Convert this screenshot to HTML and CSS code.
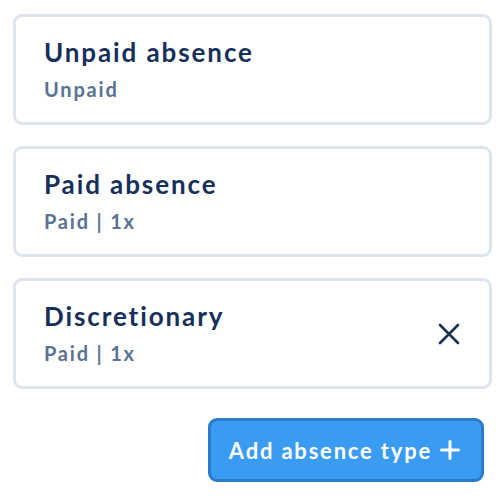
FILE: index.html
```html
<!DOCTYPE html>
<html lang="en">
<head>
<meta charset="utf-8">
<title>Absence types</title>
<link rel="stylesheet" href="styles.css">
</head>
<body>
<main class="list">
  <section class="card">
    <div class="card-text">
      <h2 class="card-title">Unpaid absence</h2>
      <p class="card-sub">Unpaid</p>
    </div>
  </section>
  <section class="card">
    <div class="card-text">
      <h2 class="card-title">Paid absence</h2>
      <p class="card-sub">Paid | 1x</p>
    </div>
  </section>
  <section class="card">
    <div class="card-text">
      <h2 class="card-title">Discretionary</h2>
      <p class="card-sub">Paid | 1x</p>
    </div>
    <button class="remove" type="button" aria-label="Remove">
      <svg width="22" height="22" viewBox="0 0 22 22" aria-hidden="true">
        <path d="M2 2 L20 20 M20 2 L2 20" stroke="#1b3152" stroke-width="2.6" stroke-linecap="round" fill="none"/>
      </svg>
    </button>
  </section>
  <div class="actions">
    <button class="add-btn" type="button">
      <span>Add absence type</span>
      <svg width="20" height="20" viewBox="0 0 20 20" aria-hidden="true">
        <path d="M10 1.5 V18.5 M1.5 10 H18.5" stroke="#ffffff" stroke-width="3" stroke-linecap="round" fill="none"/>
      </svg>
    </button>
  </div>
</main>
</body>
</html>
```
FILE: styles.css
```css
* { box-sizing: border-box; }
html, body { margin: 0; padding: 0; background: #ffffff; }
body {
  font-family: "Lato", "Open Sans", sans-serif;
  width: 504px;
  height: 498px;
  overflow: hidden;
}
.list {
  display: flex;
  flex-direction: column;
  gap: 21px;
  padding: 14px 12px 0 13px;
}
.card {
  height: 111px;
  border: 3px solid #dfe5ee;
  border-radius: 9px;
  padding: 20px 29px 0 28px;
  display: flex;
  align-items: flex-start;
  justify-content: space-between;
}
.card-text { display: flex; flex-direction: column; gap: 10px; }
.card-title {
  margin: 0;
  font-size: 26px;
  line-height: 30px;
  font-weight: 700;
  color: #16305a;
  letter-spacing: 1.9px;
}
.card-sub {
  margin: 0;
  font-size: 20px;
  line-height: 24px;
  font-weight: 700;
  color: #5a7293;
  letter-spacing: 1.8px;
}
.remove {
  align-self: center;
  margin-top: -20px;
  background: none;
  border: 0;
  padding: 0;
  width: 22px;
  height: 22px;
  display: flex;
}
.actions {
  display: flex;
  justify-content: flex-end;
  padding-right: 8px;
  margin-top: 8px;
}
.add-btn {
  display: flex;
  align-items: center;
  gap: 8px;
  height: 64px;
  padding: 0 21px 0 18px;
  background: #3a9bf2;
  border: 3px solid #2b7bcb;
  border-radius: 9px;
  color: #ffffff;
  font-family: "Lato", "Open Sans", sans-serif;
  font-size: 22px;
  font-weight: 700;
  letter-spacing: 1.8px;
}
```
